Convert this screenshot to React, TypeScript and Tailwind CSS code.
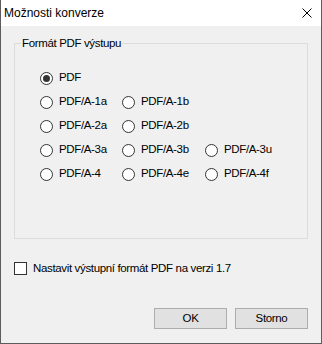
import React from "react";

function Radio({ label, checked = false }: { label: string; checked?: boolean }) {
  return (
    <div className="flex items-center h-[24px]">
      <span className="w-[13px] h-[13px] rounded-full border border-[#333333] bg-white flex items-center justify-center shrink-0">
        {checked && <span className="w-[7px] h-[7px] rounded-full bg-[#333333]" />}
      </span>
      <span className="ml-[6px] whitespace-nowrap">{label}</span>
    </div>
  );
}

export default function App() {
  return (
    <div
      className="w-[322px] h-[344px] border-x border-b border-[#5c5c5c] bg-[#f0f0f0] flex flex-col text-black text-[11.5px] tracking-[-0.35px]"
      style={{ fontFamily: '"Liberation Sans", Arial, sans-serif' }}
    >
      <div className="h-[26px] bg-white flex items-center justify-between pl-[3px] pr-[8px] shrink-0">
        <span className="text-[12px] tracking-normal">Možnosti konverze</span>
        <svg width="10" height="10" viewBox="0 0 10 10" className="mr-[1px]">
          <path d="M0.5 0.5 L9.5 9.5 M9.5 0.5 L0.5 9.5" stroke="#000" strokeWidth="1" fill="none" />
        </svg>
      </div>
      <div className="flex-1 flex flex-col px-[13px]">
        <div className="relative mt-[17px] h-[196px] border border-[#dcdcdc]">
          <span className="absolute left-[6px] top-[-8px] px-[1px] bg-[#f0f0f0] leading-[14px]">Formát PDF výstupu</span>
          <div className="pt-[22px] pl-[25px] grid grid-cols-[82px_83px_auto]">
            <Radio label="PDF" checked />
            <div />
            <div />
            <Radio label="PDF/A-1a" />
            <Radio label="PDF/A-1b" />
            <div />
            <Radio label="PDF/A-2a" />
            <Radio label="PDF/A-2b" />
            <div />
            <Radio label="PDF/A-3a" />
            <Radio label="PDF/A-3b" />
            <Radio label="PDF/A-3u" />
            <Radio label="PDF/A-4" />
            <Radio label="PDF/A-4e" />
            <Radio label="PDF/A-4f" />
          </div>
        </div>
        <div className="mt-[23px] flex items-center h-[13px]">
          <span className="w-[13px] h-[13px] border border-[#333333] bg-white shrink-0" />
          <span className="ml-[6px] whitespace-nowrap">Nastavit výstupní formát PDF na verzi 1.7</span>
        </div>
        <div className="mt-[33px] flex justify-end gap-[8px]">
          <button className="w-[73px] h-[21px] bg-[#e1e1e1] border border-[#adadad] flex items-center justify-center">OK</button>
          <button className="w-[73px] h-[21px] bg-[#e1e1e1] border border-[#adadad] flex items-center justify-center">Storno</button>
        </div>
      </div>
    </div>
  );
}
